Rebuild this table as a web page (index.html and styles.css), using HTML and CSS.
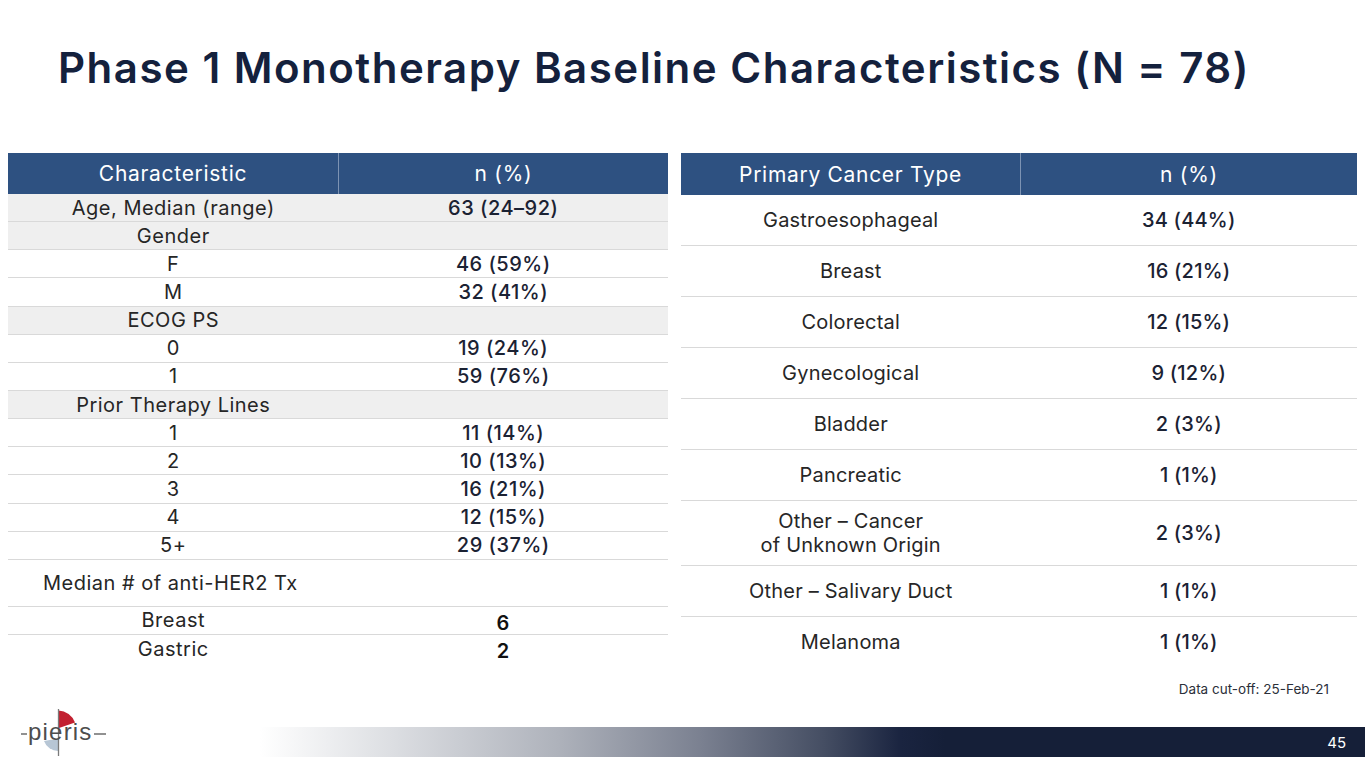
FILE: index.html
```html
<!DOCTYPE html>
<html lang="en">
<head>
<meta charset="utf-8">
<title>Phase 1 Monotherapy Baseline Characteristics</title>
<link rel="stylesheet" href="styles.css">
</head>
<body>
<div class="slide">
  <h1 class="title">Phase 1 Monotherapy Baseline Characteristics (N = 78)</h1>
  <div class="tables">
    <table class="tbl tbl-left">
      <thead>
        <tr><th class="c1">Characteristic</th><th>n (%)</th></tr>
      </thead>
      <tbody>
        <tr class="grp"><td class="c1">Age, Median (range)</td><td class="val">63 (24–92)</td></tr>
        <tr class="grp"><td class="c1">Gender</td><td class="val"></td></tr>
        <tr><td class="c1">F</td><td class="val">46 (59%)</td></tr>
        <tr><td class="c1">M</td><td class="val">32 (41%)</td></tr>
        <tr class="grp"><td class="c1">ECOG PS</td><td class="val"></td></tr>
        <tr><td class="c1">0</td><td class="val">19 (24%)</td></tr>
        <tr><td class="c1">1</td><td class="val">59 (76%)</td></tr>
        <tr class="grp"><td class="c1">Prior Therapy Lines</td><td class="val"></td></tr>
        <tr><td class="c1">1</td><td class="val">11 (14%)</td></tr>
        <tr><td class="c1">2</td><td class="val">10 (13%)</td></tr>
        <tr><td class="c1">3</td><td class="val">16 (21%)</td></tr>
        <tr><td class="c1">4</td><td class="val">12 (15%)</td></tr>
        <tr><td class="c1">5+</td><td class="val">29 (37%)</td></tr>
        <tr class="med"><td class="c1 medlabel">Median # of anti-HER2 Tx</td><td class="val"></td></tr>
        <tr class="sub"><td class="c1">Breast</td><td class="val strong">6</td></tr>
        <tr class="sub last"><td class="c1">Gastric</td><td class="val strong">2</td></tr>
      </tbody>
    </table>
    <table class="tbl tbl-right">
      <thead>
        <tr><th class="c1">Primary Cancer Type</th><th>n (%)</th></tr>
      </thead>
      <tbody>
        <tr><td class="c1">Gastroesophageal</td><td class="val">34 (44%)</td></tr>
        <tr><td class="c1">Breast</td><td class="val">16 (21%)</td></tr>
        <tr><td class="c1">Colorectal</td><td class="val">12 (15%)</td></tr>
        <tr><td class="c1">Gynecological</td><td class="val">9 (12%)</td></tr>
        <tr><td class="c1">Bladder</td><td class="val">2 (3%)</td></tr>
        <tr><td class="c1">Pancreatic</td><td class="val">1 (1%)</td></tr>
        <tr class="tall"><td class="c1">Other – Cancer<br>of Unknown Origin</td><td class="val">2 (3%)</td></tr>
        <tr><td class="c1">Other – Salivary Duct</td><td class="val">1 (1%)</td></tr>
        <tr class="last"><td class="c1">Melanoma</td><td class="val">1 (1%)</td></tr>
      </tbody>
    </table>
  </div>
  <div class="cutoff">Data cut-off: 25-Feb-21</div>
  <footer class="footer">
    <svg class="logo" width="260" height="64" viewBox="0 704 260 64" xmlns="http://www.w3.org/2000/svg">
      <path d="M58.5 710.5 A18 18 0 0 1 75 722.5 L59 728 Z" fill="#c22030"/>
      <path d="M58.5 751 A15 15 0 0 1 44 741 L58.5 738.5 Z" fill="#b7c6d5"/>
      <line x1="58.5" y1="709" x2="58.5" y2="756" stroke="#7a7a7a" stroke-width="1.3"/>
      <line x1="21" y1="734" x2="27" y2="734" stroke="#555" stroke-width="1.3"/>
      <line x1="94" y1="734" x2="106" y2="734" stroke="#555" stroke-width="1.3"/>
      <text x="28" y="740" class="logo-text">pieris</text>
    </svg>
    <div class="bar"><span class="pgnum">45</span></div>
  </footer>
</div>
</body>
</html>
```

FILE: styles.css
```css
html, body {
  margin: 0;
  padding: 0;
  background: #ffffff;
}

.slide {
  width: 1365px;
  height: 768px;
  display: flex;
  flex-direction: column;
  overflow: hidden;
  font-family: "Inter", "Liberation Sans", sans-serif;
  color: #222;
}

.title {
  margin: 0;
  padding: 43px 0 0 58px;
  font-size: 42px;
  line-height: 50px;
  font-weight: 600;
  color: #14213d;
  letter-spacing: 1.5px;
}

.tables {
  display: flex;
  align-items: flex-start;
  gap: 13px;
  margin-top: 60px;
  padding-left: 8px;
}

.tbl {
  border-collapse: collapse;
  table-layout: fixed;
}

.tbl-left {
  width: 660px;
}

.tbl-right {
  width: 676px;
}

.tbl th {
  background: #2e5181;
  color: #ffffff;
  font-weight: 400;
  font-size: 21px;
  letter-spacing: 0.7px;
  height: 41px;
  padding: 0;
  text-align: center;
  vertical-align: middle;
}

.tbl-right th {
  height: 42px;
}

.tbl th.c1 {
  border-right: 1px solid #7d93b3;
}

.tbl-left th.c1 {
  width: 330px;
}

.tbl-right th.c1 {
  width: 339px;
}

.tbl td {
  padding: 0;
  text-align: center;
  vertical-align: middle;
  border-bottom: 1px solid #d9d9d9;
  color: #262626;
}

.tbl td.val {
  color: #1b2233;
  font-weight: 500;
}

.tbl-left td {
  font-size: 20px;
  letter-spacing: 0.5px;
  height: 27.15px;
  line-height: 22px;
}

.tbl-left tr.grp td {
  background: #efefef;
}

.tbl-left tr.med td {
  height: 46px;
}

.tbl-left td.medlabel {
  text-align: left;
  padding-left: 35px;
}

.tbl-left td.strong {
  font-weight: 600;
  padding-top: 5px;
  height: 22px;
  color: #111;
}

.tbl-left tr.last td {
  border-bottom: none;
}

.tbl-right td {
  font-size: 20px;
  letter-spacing: 0.2px;
  height: 50px;
  line-height: 24px;
}

.tbl-right tr.tall td {
  height: 64px;
}

.tbl-right tr.last td {
  border-bottom: none;
}

.cutoff {
  margin-top: 14px;
  padding-right: 36px;
  text-align: right;
  font-size: 13.5px;
  line-height: 17px;
  color: #2b2f3a;
}

.footer {
  margin-top: auto;
  height: 64px;
  display: flex;
  align-items: flex-start;
}

.logo {
  display: block;
  flex: none;
}

.logo-text {
  font-family: "Liberation Sans", "Inter", sans-serif;
  font-size: 24px;
  letter-spacing: 1.2px;
  fill: #4d4d4d;
}

.bar {
  flex: 1;
  height: 30px;
  margin-top: 23px;
  display: flex;
  align-items: center;
  justify-content: flex-end;
  padding-right: 19px;
  background: linear-gradient(to right, #ffffff 0%, #dcdee2 12%, #aeb2bb 27%, #7a8090 40%, #454e63 51%, #1a2440 58%, #151f38 62%, #151f38 100%);
}

.pgnum {
  color: #ffffff;
  font-size: 15px;
}
```
